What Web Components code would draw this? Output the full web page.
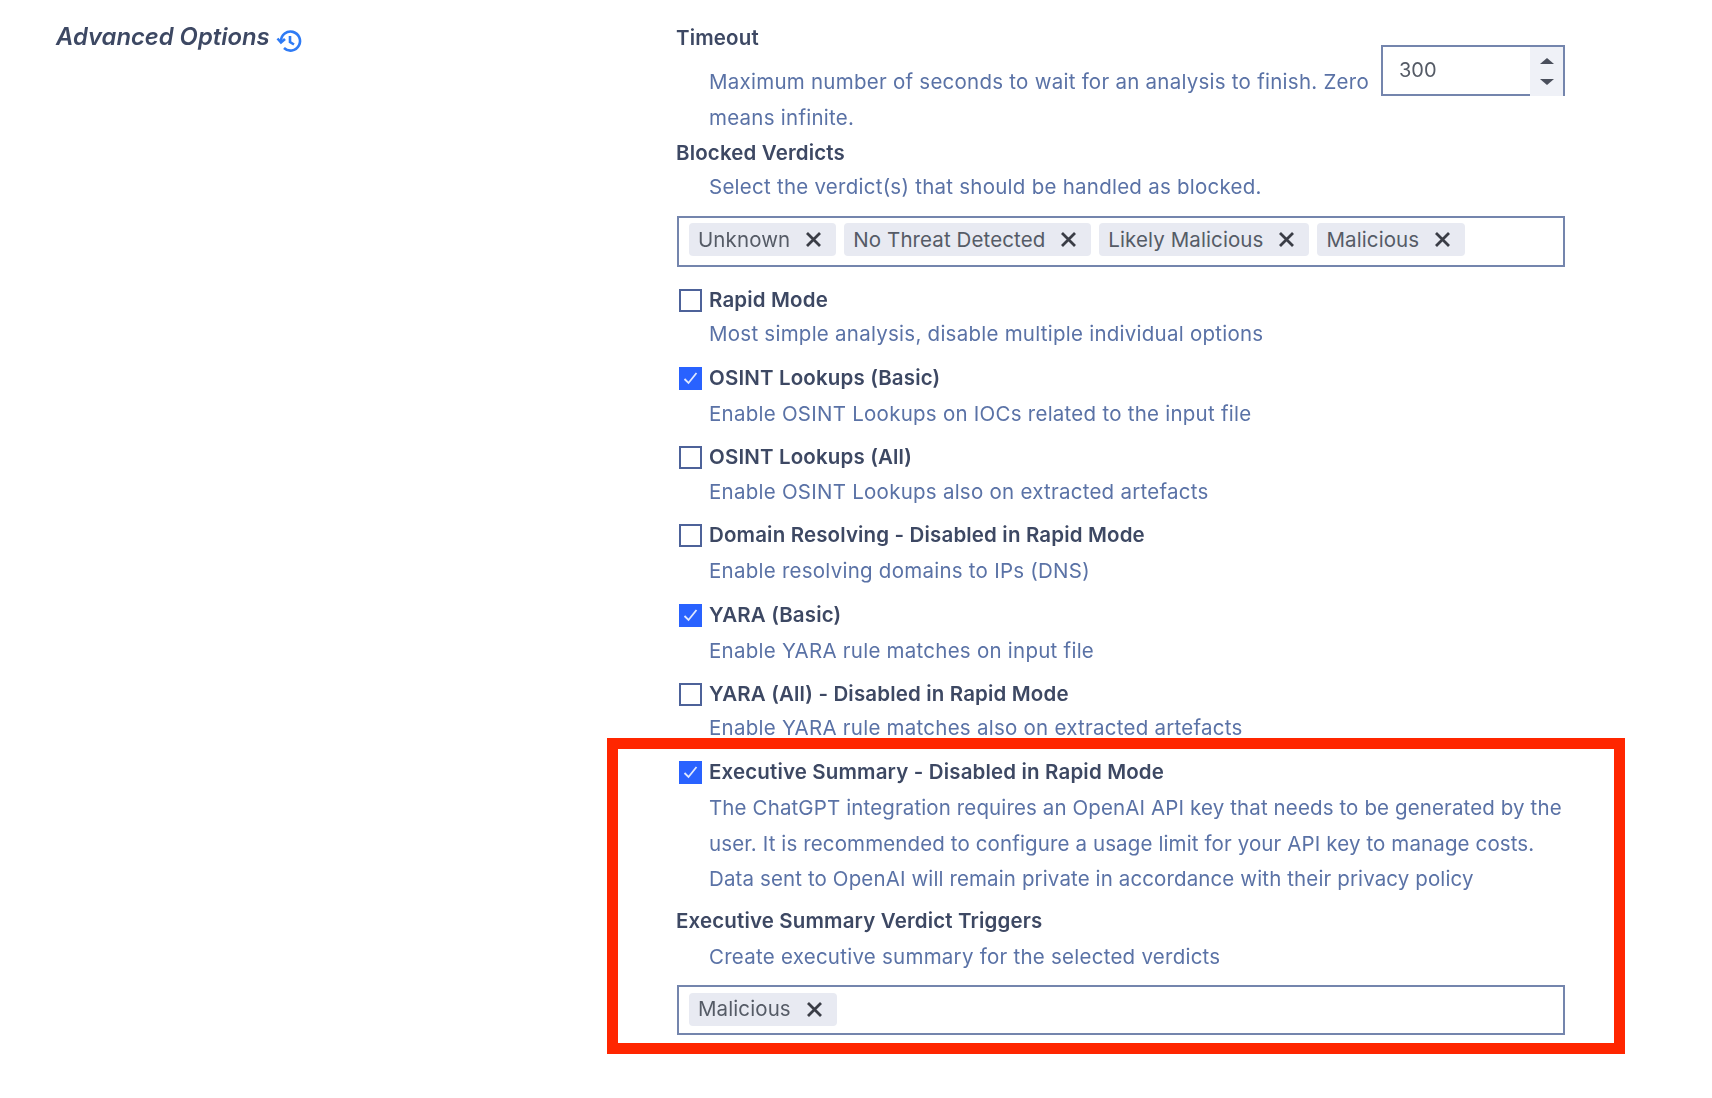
<!DOCTYPE html>
<html>
<head>
<meta charset="utf-8">
<title>Advanced Options</title>
<style>
  html, body { margin: 0; background: #fff; }
  body { font-family: Inter, "Liberation Sans", sans-serif; }
</style>
</head>
<body>
<options-page>
  <section-title slot="side">Advanced Options</section-title>

  <option-field label="Timeout" style="--top:20px;--gap:8px;--lh:35.5px">
    <number-box slot="aside" value="300"></number-box>
    Maximum number of seconds to wait for an analysis to finish. Zero means infinite.
  </option-field>

  <option-field label="Blocked Verdicts" style="--gap:-2px">
    Select the verdict(s) that should be handled as blocked.
  </option-field>
  <chip-box style="--top:11px;--pad:5px" items="Unknown|No Threat Detected|Likely Malicious|Malicious"></chip-box>

  <option-check label="Rapid Mode" style="--top:15px;--gap:-2px">Most simple analysis, disable multiple individual options</option-check>
  <option-check checked label="OSINT Lookups (Basic)" style="--top:8px">Enable OSINT Lookups on IOCs related to the input file</option-check>
  <option-check label="OSINT Lookups (All)" style="--top:7px;--gap:-1px">Enable OSINT Lookups also on extracted artefacts</option-check>
  <option-check label="Domain Resolving - Disabled in Rapid Mode" style="--top:7px">Enable resolving domains to IPs (DNS)</option-check>
  <option-check checked label="YARA (Basic)" style="--top:8px">Enable YARA rule matches on input file</option-check>
  <option-check label="YARA (All) - Disabled in Rapid Mode" style="--top:7px;--gap:-2px">Enable YARA rule matches also on extracted artefacts</option-check>

  <red-frame style="--top:8px">
    <option-check checked label="Executive Summary - Disabled in Rapid Mode" style="--lh:35.5px;--ls:.12px">The ChatGPT integration requires an OpenAI API key that needs to be generated by the user. It is recommended to configure a usage limit for your API key to manage costs. Data sent to OpenAI will remain private in accordance with their privacy policy</option-check>
    <option-field label="Executive Summary Verdict Triggers" style="--top:6px;--gap:0px">Create executive summary for the selected verdicts</option-field>
    <chip-box style="--top:10px;--pad:6px;--height:50px" items="Malicious"></chip-box>
  </red-frame>
</options-page>

<script>
const tpl = (html) => {
  const t = document.createElement("template");
  t.innerHTML = html;
  return t;
};

class Base extends HTMLElement {
  constructor(template) {
    super();
    this.attachShadow({ mode: "open" });
    this.shadowRoot.append(template.content.cloneNode(true));
  }
}

const pageTemplate = tpl(/*html*/ `
  <style>
    :host {
      display: grid;
      grid-template-columns: 676px 889px;
      min-height: 1098px;
      align-content: start;
      color: #3d4863;
      filter: blur(0.45px);
    }
  </style>
  <div><slot name="side"></slot></div>
  <div><slot></slot></div>
`);
class OptionsPage extends Base {
  constructor() { super(pageTemplate); }
}

const titleTemplate = tpl(/*html*/ `
  <style>
    :host {
      display: flex;
      align-items: center;
      padding: 18px 0 0 56px;
      height: 36px;
      font-size: 23.8px;
      font-style: italic;
      font-weight: 600;
      color: #3d4863;
    }
    svg { margin: 10px 0 0 6px; }
  </style>
  <slot></slot>
  <svg width="26" height="26" viewBox="0 0 26 26" fill="none" stroke="#2f7bf5" stroke-width="2.6">
    <path d="M5 13a9.5 9.5 0 1 1 3 7"/>
    <path d="M1.5 10.5 5 14.5l4-3.5" stroke-linejoin="miter"/>
    <path d="M14 8v6l4 2.5"/>
  </svg>
`);
class SectionTitle extends Base {
  constructor() { super(titleTemplate); }
}

const fieldStyles = /*html*/ `
  <style>
    :host {
      display: block;
      margin-top: var(--top, 0);
      font-size: 20.5px;
      line-height: 36px;
    }
    .label { font-weight: 600; color: #3d4863; letter-spacing: .15px; }
    .desc {
      color: #5a72a6;
      padding-left: 33px;
      margin-top: var(--gap, 0);
      line-height: var(--lh, 36px);
      letter-spacing: var(--ls, .25px);
    }
  </style>
`;

const fieldTemplate = tpl(fieldStyles + /*html*/ `
  <style>
    .row { display: flex; gap: 6px; margin-top: var(--gap, 0); }
    .row .desc { flex: 1; margin-top: 0; }
  </style>
  <div class="label"></div>
  <div class="row">
    <div class="desc"><slot></slot></div>
    <slot name="aside"></slot>
  </div>
`);
class OptionField extends Base {
  constructor() { super(fieldTemplate); }
  connectedCallback() {
    this.shadowRoot.querySelector(".label").textContent = this.getAttribute("label");
  }
}

const checkTemplate = tpl(fieldStyles + /*html*/ `
  <style>
    .head { display: flex; align-items: center; }
    .box {
      box-sizing: border-box;
      width: 23px;
      height: 23px;
      margin: 0 7px 0 3px;
      border: 2px solid #4d6299;
      background: #fff;
    }
    svg { display: none; }
    :host([checked]) .box { background: #2962ff; border-color: #2962ff; }
    :host([checked]) svg { display: block; }
  </style>
  <div class="head">
    <div class="box">
      <svg width="19" height="19" viewBox="0 0 19 19" fill="none" stroke="#dfe8ff" stroke-width="1.8">
        <path d="M3.5 10l4 4 8-10"/>
      </svg>
    </div>
    <div class="label"></div>
  </div>
  <div class="desc"><slot></slot></div>
`);
class OptionCheck extends Base {
  constructor() { super(checkTemplate); }
  connectedCallback() {
    this.shadowRoot.querySelector(".label").textContent = this.getAttribute("label");
  }
}

const numberTemplate = tpl(/*html*/ `
  <style>
    :host {
      display: flex;
      flex: none;
      box-sizing: border-box;
      width: 184px;
      height: 51px;
      margin-top: -19px;
      border-top: 2px solid #7485ad;
      border-left: 2px solid #7485ad;
      border-right: 2px solid #7485ad;
      font-size: 20px;
      line-height: 46px;
      color: #555b66;
    }
    .value { flex: 1; padding-left: 16px; border-bottom: 2px solid #7485ad; }
    .spin {
      width: 33px;
      background: #eff1f7;
      display: flex;
      flex-direction: column;
      align-items: center;
      padding-top: 11px;
      gap: 15px;
    }
    i { width: 0; height: 0; border: 7px solid transparent; border-top: 0; border-bottom: 6px solid #4a4f5c; }
    i + i { border-bottom: 0; border-top: 6px solid #4a4f5c; }
  </style>
  <div class="value"></div>
  <div class="spin"><i></i><i></i></div>
`);
class NumberBox extends Base {
  constructor() { super(numberTemplate); }
  connectedCallback() {
    this.shadowRoot.querySelector(".value").textContent = this.getAttribute("value");
  }
}

const chipBoxTemplate = tpl(/*html*/ `
  <style>
    :host {
      display: flex;
      align-items: flex-start;
      gap: 8px;
      box-sizing: border-box;
      height: var(--height, 51px);
      margin-top: var(--top, 0);
      margin-left: 1px;
      padding: var(--pad, 5px) 0 0 10px;
      border: 2px solid #7485ad;
    }
  </style>
`);
class ChipBox extends Base {
  constructor() { super(chipBoxTemplate); }
  connectedCallback() {
    for (const text of this.getAttribute("items").split("|")) {
      const chip = document.createElement("verdict-chip");
      chip.textContent = text;
      this.shadowRoot.append(chip);
    }
  }
}

const chipTemplate = tpl(/*html*/ `
  <style>
    :host {
      display: flex;
      align-items: center;
      box-sizing: border-box;
      height: 33px;
      padding: 0 14px 1px 9px;
      gap: 15px;
      border-radius: 4px;
      background: #e8eaf2;
      font-size: 20.5px;
      letter-spacing: .1px;
      color: #555b66;
    }
    svg { margin-top: 1px; }
  </style>
  <slot></slot>
  <svg width="17" height="17" viewBox="0 0 17 17" stroke="#3a3d46" stroke-width="2.8">
    <path d="M2 2l13 13M15 2 2 15"/>
  </svg>
`);
class VerdictChip extends Base {
  constructor() { super(chipTemplate); }
}

const frameTemplate = tpl(/*html*/ `
  <style>
    :host { display: block; position: relative; margin-top: var(--top, 0); }
    .mark {
      position: absolute;
      left: -69px;
      right: -60px;
      top: -16px;
      bottom: -19px;
      border: 11px solid #ff2600;
      pointer-events: none;
    }
  </style>
  <slot></slot>
  <div class="mark"></div>
`);
class RedFrame extends Base {
  constructor() { super(frameTemplate); }
}

customElements.define("options-page", OptionsPage);
customElements.define("section-title", SectionTitle);
customElements.define("option-field", OptionField);
customElements.define("option-check", OptionCheck);
customElements.define("number-box", NumberBox);
customElements.define("chip-box", ChipBox);
customElements.define("verdict-chip", VerdictChip);
customElements.define("red-frame", RedFrame);
</script>
</body>
</html>
